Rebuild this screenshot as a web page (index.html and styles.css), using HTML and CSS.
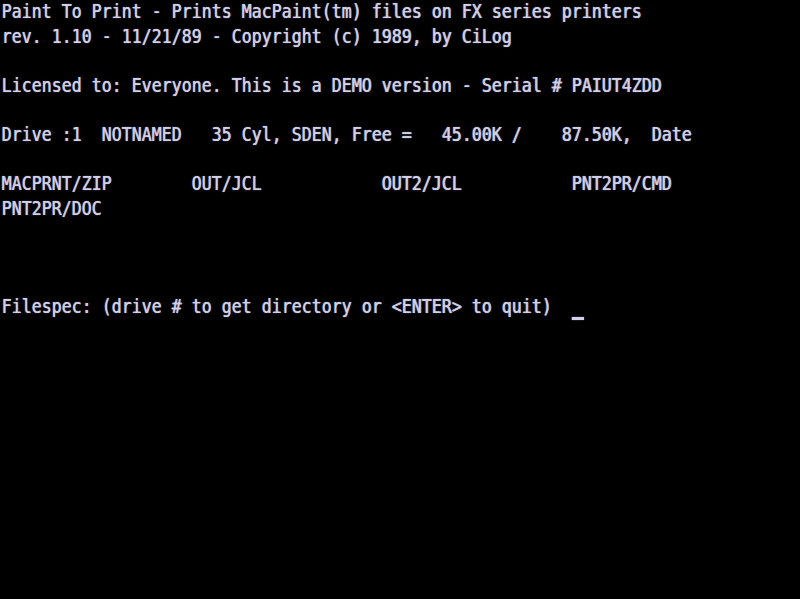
FILE: index.html
```html
<!DOCTYPE html>
<html lang="en">
<head>
<meta charset="utf-8">
<title>Paint To Print</title>
<link rel="stylesheet" href="styles.css">
</head>
<body>
<pre class="screen">Paint To Print - Prints MacPaint(tm) files on FX series printers
rev. 1.10 - 11/21/89 - Copyright (c) 1989, by CiLog

Licensed to: Everyone. This is a DEMO version - Serial # PAIUT4ZDD

Drive :1  NOTNAMED   35 Cyl, SDEN, Free =   45.00K /    87.50K,  Date

MACPRNT/ZIP        OUT/JCL            OUT2/JCL           PNT2PR/CMD
PNT2PR/DOC



Filespec: (drive # to get directory or &lt;ENTER&gt; to quit)  <span class="cursor"></span></pre>
</body>
</html>
```

FILE: styles.css
```css
html, body {
  margin: 0;
  padding: 0;
  background: #000;
  width: 800px;
  height: 599px;
  overflow: hidden;
}

.screen {
  margin: -1px 0 0 0;
  padding: 0 0 0 1.7px;
  font-family: "DejaVu Sans Mono", "Liberation Mono", monospace;
  font-size: 19px;
  font-weight: normal;
  line-height: 24.6px;
  color: #d2d0ea;
  text-shadow: 0.7px 0 0 rgba(210, 208, 234, 0.85), 0 0 2px rgba(190, 186, 230, 0.45);
  white-space: pre;
  transform: scaleX(0.8743);
  transform-origin: 0 0;
}

.cursor {
  display: inline-block;
  width: 13.7px;
  height: 3px;
  margin-left: 0.5px;
  background: #d2d0ea;
  box-shadow: 0 0 2px rgba(190, 186, 230, 0.45);
  vertical-align: -7px;
}
```
